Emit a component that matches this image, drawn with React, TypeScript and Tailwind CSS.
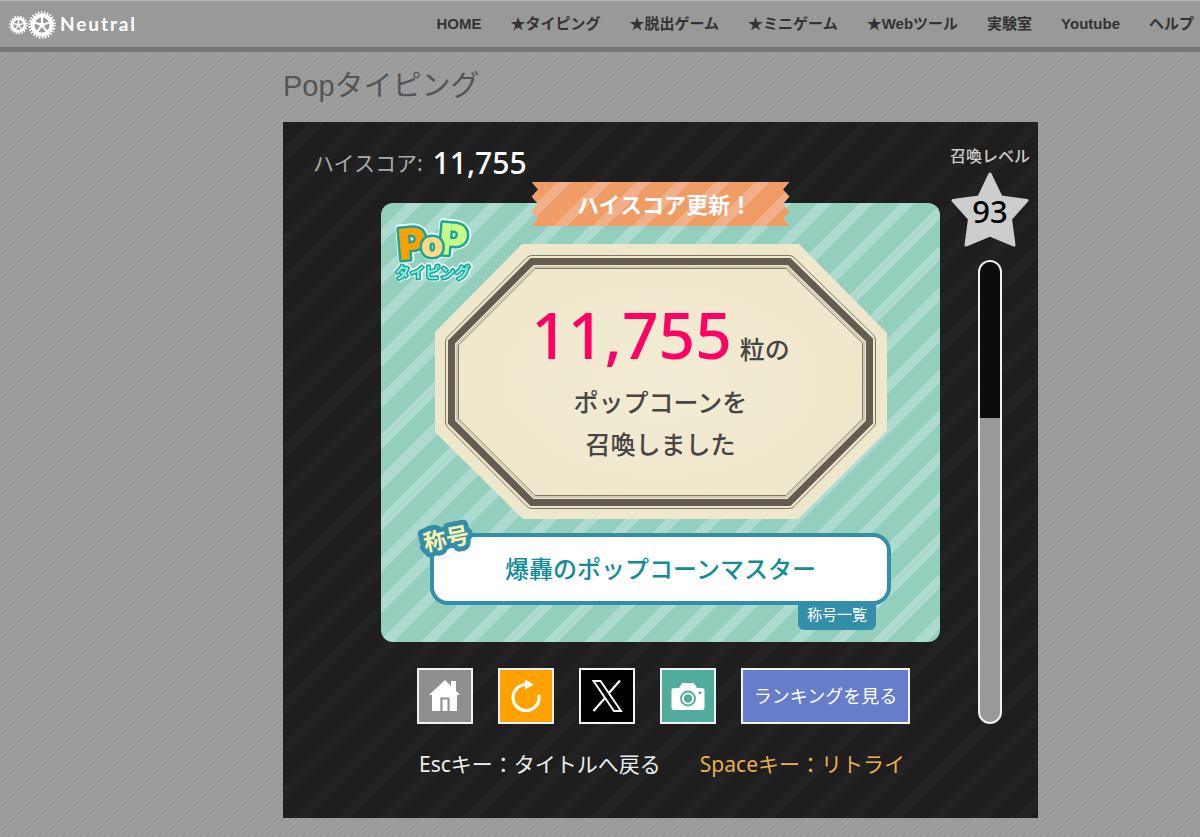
import React from "react";

const JP = "font-['Noto_Sans','Noto_Sans_CJK_JP',sans-serif]";

const navItems = [
  "HOME",
  "★タイピング",
  "★脱出ゲーム",
  "★ミニゲーム",
  "★Webツール",
  "実験室",
  "Youtube",
  "ヘルプ",
];

function Gear({ cx, cy, r, teeth }: { cx: number; cy: number; r: number; teeth: number }) {
  const spokes = [0, 72, 144, 216, 288];
  const pitch = (2 * Math.PI * r) / teeth;
  return (
    <g transform={`translate(${cx} ${cy})`} fill="none" stroke="#fff">
      <circle r={r} strokeWidth={r * 0.2} strokeDasharray={`${pitch * 0.5} ${pitch * 0.5}`} />
      <circle r={r * 0.76} strokeWidth={r * 0.32} />
      {spokes.map((a) => (
        <line key={a} x1="0" y1="0" x2="0" y2={-r * 0.7} strokeWidth={r * 0.17} transform={`rotate(${a})`} />
      ))}
      <circle r={r * 0.2} fill="#fff" stroke="none" />
    </g>
  );
}

function SiteHeader() {
  return (
    <header className="flex items-center justify-between border-t border-b-[5px] border-t-[#b8b8b8] border-b-[#777] bg-[#999] pr-[6px] pl-2">
      <a href="#home" className="flex h-[46px] items-center text-white" aria-label="Neutral">
        <svg width="50" height="34" viewBox="0 0 50 32" aria-hidden="true">
          <Gear cx={10.5} cy={17} r={8.5} teeth={18} />
          <Gear cx={34} cy={17} r={12.5} teeth={26} />
        </svg>
        <span className="pl-[2px] font-['Lato','Noto_Sans',sans-serif] text-[19px] leading-6 font-bold tracking-widest">Neutral</span>
      </a>
      <nav className="flex gap-[29px]">
        {navItems.map((item) => (
          <a
            key={item}
            href="#menu"
            className="font-['Liberation_Sans','Noto_Sans_CJK_JP',sans-serif] text-[15px] leading-6 font-bold whitespace-nowrap text-[#333]"
          >
            {item}
          </a>
        ))}
      </nav>
    </header>
  );
}

function PopLogo() {
  return (
    <svg
      width="84"
      height="78"
      viewBox="0 -10 84 78"
      className="absolute top-[4px] left-[11px] [filter:drop-shadow(1px_1px_0_#e8f7f1)_drop-shadow(-1px_-1px_0_#e8f7f1)_drop-shadow(1px_-1px_0_#e8f7f1)]"
      role="img"
      aria-label="POP タイピング"
    >
      <g fontFamily="Inter, sans-serif" fontWeight="900" stroke="#18a69c" strokeWidth="5" strokeLinejoin="round" paintOrder="stroke">
        <text x="6" y="42" fontSize="43" fill="#f9a100" transform="rotate(-5 20 25)">P</text>
        <text x="47" y="38" fontSize="43" fill="#c5fb86" transform="rotate(5 60 25)">P</text>
        <text x="29" y="40" fontSize="36" fill="#ffd884">o</text>
      </g>
      <text
        x="3"
        y="61"
        fontFamily="'Noto Sans CJK JP', sans-serif"
        fontWeight="700"
        fontSize="15"
        fill="#8be8dc"
        stroke="#18a69c"
        strokeWidth="3"
        strokeLinejoin="round"
        paintOrder="stroke"
      >
        タイピング
      </text>
    </svg>
  );
}

function Ribbon() {
  return (
    <div className="absolute -top-[21px] left-1/2 flex h-11 w-[258px] -translate-x-1/2 items-center justify-center bg-[repeating-linear-gradient(135deg,#ef9c67_0_18px,#f1b08a_18px_28px)] pl-1 [clip-path:polygon(0_0,100%_0,97.5%_17%,100%_33%,97.5%_50%,100%_67%,97.5%_83%,100%_100%,0_100%,2.5%_83%,0_67%,2.5%_50%,0_33%,2.5%_17%)]">
      <span className="pl-1 text-[22px] leading-8 font-bold whitespace-nowrap text-white">ハイスコア更新！</span>
    </div>
  );
}

function Plaque() {
  return (
    <div className="relative mx-auto w-[452px]">
      <svg className="absolute inset-0 h-full w-full" viewBox="0 0 452 275" preserveAspectRatio="none" aria-hidden="true">
        <defs>
          <radialGradient id="paper">
            <stop offset="0" stopColor="#f2ecd4" />
            <stop offset="1" stopColor="#eee7cb" />
          </radialGradient>
        </defs>
        <path d="M87 0H364L452 89V187L363 275H88L0 188V88Z" fill="url(#paper)" />
        <g fill="none" stroke="#625d50">
          <path d="M97 17.5H354L434.5 96V178L354 258.5H97L16.5 178V98Z" strokeWidth="7" />
          <path
            d="M97 11.5H354Q357 11.5 359 13.5L438.500 91Q440.500 93 440.500 96V178Q440.500 181 438.500 183L359 262.500Q357 264.500 354 264.500H97Q94 264.500 92 262.500L12.500 183Q10.500 181 10.500 178V98Q10.500 95 12.500 93L92 13.500Q94 11.500 97 11.500Z"
            strokeWidth="1"
            strokeOpacity=".8"
          />
          <path d="M99 23H352L429 98V176L352 253H99L22 176V100Z" strokeWidth=".8" strokeOpacity=".5" />
          <path d="M100 24.500H351L427.500 99V175L351 251.500H100L23.500 175V101Z" strokeWidth="1" strokeOpacity=".8" />
        </g>
      </svg>
      <div className="relative flex h-[275px] flex-col items-center pt-[59px] text-[25px] leading-[42px] text-[#464646]">
        <p className="flex items-baseline gap-2 leading-[63px]">
          <strong className="text-[64px] font-medium text-[#ff0064]">11,755</strong>
          <span className="font-medium">粒の</span>
        </p>
        <p className="font-medium">ポップコーンを</p>
        <p className="font-medium">召喚しました</p>
      </div>
    </div>
  );
}

function TitleAward() {
  return (
    <div className="relative mx-auto mt-[14px] flex w-[461px] flex-col items-end">
      <div className="flex h-[72px] w-full items-center justify-center rounded-[18px] border-4 border-[#338fa9] bg-white">
        <p className="text-[24px] leading-9 font-medium whitespace-nowrap text-[#128c97]">爆轟のポップコーンマスター</p>
      </div>
      <button type="button" className="-mt-px mr-[15px] flex h-[26px] w-[78px] justify-center rounded-b-[6px] bg-[#338fa9] text-[15px] leading-5 text-white">
        称号一覧
      </button>
      <svg width="64" height="50" viewBox="0 0 64 50" className="absolute -top-[21px] -left-4" role="img" aria-label="称号">
        <text
          x="32"
          y="35"
          textAnchor="middle"
          transform="rotate(-11 32 26)"
          fontFamily="'Noto Sans CJK JP', sans-serif"
          fontSize="23"
          fontWeight="700"
          fill="#fbf3ad"
          stroke="#338fa9"
          strokeWidth="10"
          strokeLinejoin="round"
          paintOrder="stroke"
        >
          称号
        </text>
      </svg>
    </div>
  );
}

function HomeIcon() {
  return (
    <svg width="32" height="34" viewBox="0 0 32 34" aria-hidden="true">
      <path d="M16 1 22 7V2H27V12L31 16H28V32H20V19H12V32H3V16H0Z" fill="#fff" />
      <path d="M13.500 20.500H18.500V32H13.500Z" fill="#fff" />
      <path d="M12 32V19H20V32" fill="none" stroke="#8f8f8f" strokeWidth="1.200" />
    </svg>
  );
}

function RetryIcon() {
  return (
    <svg width="34" height="36" viewBox="0 0 34 36" aria-hidden="true">
      <path d="M30 18A13 13 0 1 1 17 6.500" fill="none" stroke="#fff" strokeWidth="3.200" strokeLinecap="round" />
      <path d="M16 1.500 25 6.500 16 11.500Z" fill="#fff" />
    </svg>
  );
}

function XIcon() {
  return (
    <svg width="32" height="34" viewBox="0 0 32 34" fill="none" stroke="#fff" aria-hidden="true">
      <path d="M2.500 2H9.500L30 32H23Z" strokeWidth="1.900" />
      <path d="M29 1.500 18 14M14 19 2.500 32" strokeWidth="2.200" />
    </svg>
  );
}

function CameraIcon() {
  return (
    <svg width="34" height="29" viewBox="0 0 34 29" aria-hidden="true">
      <path d="M3 6H8L10.500 2Q11 1 12.500 1H21.500Q23 1 23.500 2L26 6H31Q33.500 6 33.500 8.500V25.500Q33.500 28 31 28H3Q.5 28 .5 25.500V8.500Q.5 6 3 6Z" fill="#fff" />
      <circle cx="17" cy="16.500" r="7" fill="#fff" stroke="#52ac9d" strokeWidth="1.800" />
      <circle cx="17" cy="16.500" r="3.800" fill="#52ac9d" stroke="#52ac9d" strokeWidth="1" />
      <rect x="27.500" y="9.500" width="3" height="2.500" rx=".8" fill="#52ac9d" />
    </svg>
  );
}

const squareButton = "flex h-[56px] w-[56px] items-center justify-center border-2 border-[#f2f2f2]";

function Actions() {
  return (
    <div className="mt-[26px] flex gap-[25px] pl-[36px]">
      <button type="button" aria-label="タイトルへ戻る" className={`${squareButton} bg-[#8f8f8f]`}>
        <HomeIcon />
      </button>
      <button type="button" aria-label="リトライ" className={`${squareButton} bg-[#ffa200]`}>
        <RetryIcon />
      </button>
      <button type="button" aria-label="Xでシェア" className={`${squareButton} bg-black`}>
        <XIcon />
      </button>
      <button type="button" aria-label="画像を保存" className={`${squareButton} bg-[#52ac9d]`}>
        <CameraIcon />
      </button>
      <button type="button" className="h-[56px] w-[169px] border-2 border-[#f2f2f2] bg-[#667dca] text-[18px] leading-6 whitespace-nowrap text-white">
        ランキングを見る
      </button>
    </div>
  );
}

function LevelGauge({ level, remaining }: { level: number; remaining: number }) {
  return (
    <aside className="flex flex-col items-center pt-[22px] pl-[2px]">
      <p className="text-[16px] leading-6 font-medium whitespace-nowrap text-[#ccc]">召喚レベル</p>
      <div className="relative mt-[3px] flex h-[80px] w-[80px] items-center justify-center">
        <svg className="absolute inset-0" width="80" height="80" viewBox="0 0 80 80" aria-hidden="true">
          <path
            d="M40 3 51 26 77 29.500 60.500 48 64 74 40 64 16 74 19.500 48 3 29.500 29 26Z"
            fill="#cdcdcd"
            stroke="#cdcdcd"
            strokeWidth="3"
            strokeLinejoin="round"
          />
        </svg>
        <span className="relative text-[31px] leading-10 font-medium text-black">{level}</span>
      </div>
      <div
        role="meter"
        aria-label="召喚レベル"
        aria-valuemin={0}
        aria-valuemax={100}
        aria-valuenow={100 - remaining}
        className="mt-[9px] h-[464px] w-6 overflow-hidden rounded-full border-2 border-[#f0f0f0] bg-[#999]"
      >
        <div className="bg-[#0c0c0c]" style={{ height: `${remaining}%` }} />
      </div>
    </aside>
  );
}

export default function App() {
  return (
    <div
      className={`min-h-screen bg-[#9e9e9e] bg-[linear-gradient(135deg,#9f9f9f_25%,#999_25%_50%,#9f9f9f_50%_75%,#999_75%)] bg-[length:6px_6px] ${JP}`}
    >
      <SiteHeader />
      <main className="grid grid-cols-[283px_minmax(0,755px)_1fr] pb-[19px]">
        <div className="col-start-2">
          <h1 className="pt-[14px] pb-4 font-['Liberation_Sans','Noto_Sans_CJK_JP',sans-serif] text-[29px] leading-10 font-normal text-[#555]">
            Popタイピング
          </h1>
          <section className="grid grid-cols-[98px_minmax(0,1fr)_98px] bg-[repeating-linear-gradient(135deg,#1e1e1e_0_19px,#222_19px_30px)] pb-[36px]">
            <p className="col-span-2 flex h-[81px] items-center gap-[10px] pl-[30px] text-[#aaa]">
              <span className="text-[21px] leading-8">ハイスコア:</span>
              <strong className="text-[30px] leading-8 font-medium text-white">11,755</strong>
            </p>
            <div className="col-start-3 row-span-2 row-start-1">
              <LevelGauge level={93} remaining={34} />
            </div>
            <div className="col-start-2">
              <div className="relative rounded-xl bg-[repeating-linear-gradient(135deg,#94cfbd_0_19px,#aedbcf_19px_29px)] pt-[41px] pb-[12px]">
                <Ribbon />
                <PopLogo />
                <Plaque />
                <TitleAward />
              </div>
              <Actions />
              <p className="mt-[22px] flex gap-[39px] pl-[38px] text-[21px] leading-9 whitespace-nowrap">
                <span className="text-[#eee]">Escキー：タイトルへ戻る</span>
                <span className="text-[#e8b04f]">Spaceキー：リトライ</span>
              </p>
            </div>
          </section>
        </div>
      </main>
    </div>
  );
}
